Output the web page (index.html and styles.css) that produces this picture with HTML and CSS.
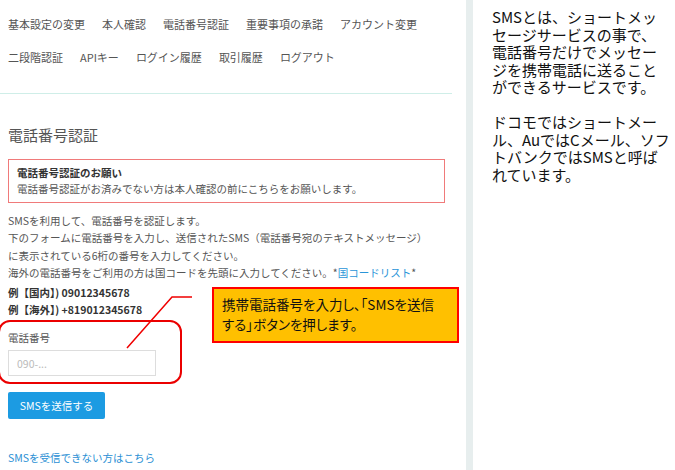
FILE: index.html
```html
<!DOCTYPE html>
<html lang="ja">
<head>
  <meta charset="UTF-8">
  <meta name="viewport" content="width=device-width, initial-scale=1.0">
  <title>電話番号認証</title>
  <link rel="stylesheet" href="styles.css">
</head>

<body>
  <div class="page">
    <div class="main">
      <!-- Settings tabs -->
      <nav class="tabs">
        <div class="tab-row">
          <a href="#">基本設定の変更</a>
          <a href="#">本人確認</a>
          <a href="#">電話番号認証</a>
          <a href="#">重要事項の承諾</a>
          <a href="#">アカウント変更</a>
        </div>
        <div class="tab-row">
          <a href="#">二段階認証</a>
          <a href="#">APIキー</a>
          <a href="#">ログイン履歴</a>
          <a href="#">取引履歴</a>
          <a href="#">ログアウト</a>
        </div>
      </nav>

      <!-- Phone verification form -->
      <div class="content">
        <h2 class="title">電話番号認証</h2>

        <div class="alert">
          <strong>電話番号認証のお願い</strong>
          <p>電話番号認証がお済みでない方は本人確認の前にこちらをお願いします。</p>
        </div>

        <p class="desc">
          SMSを利用して、電話番号を認証します。<br>
          下のフォームに電話番号を入力し、送信されたSMS（電話番号宛のテキストメッセージ）<br>
          に表示されている6桁の番号を入力してください。<br>
          海外の電話番号をご利用の方は国コードを先頭に入力してください。*<a href="#">国コードリスト</a>*
        </p>

        <p class="examples">
          例【国内】) 09012345678<br>
          例【海外】) +819012345678
        </p>

        <label class="field-label" for="phone">電話番号</label>
        <input id="phone" class="field-input" type="text" placeholder="090-...">

        <button class="send-button">SMSを送信する</button>

        <a class="help-link" href="#">SMSを受信できない方はこちら</a>
      </div>

      <!-- Annotation overlay -->
      <div class="mark-ring"></div>
      <svg class="mark-line" width="200" height="360" viewBox="0 0 200 360">
        <polyline points="127,348 172,297 192,297" fill="none" stroke="#f00000" stroke-width="1.5" />
      </svg>
      <div class="callout">携帯電話番号を入力し、「SMSを送信<br>する」ボタンを押します。</div>
    </div>

    <div class="divider"></div>

    <!-- Side note -->
    <aside class="side">
      <p>SMSとは、ショートメッ<br>セージサービスの事で、<br>電話番号だけでメッセー<br>ジを携帯電話に送ること<br>ができるサービスです。</p>
      <p>ドコモではショートメー<br>ル、AuではCメール、ソフ<br>トバンクではSMSと呼ば<br>れています。</p>
    </aside>
  </div>
</body>
</html>
```

FILE: styles.css
```css
body {
  margin: 0;
  padding: 0;
  background-color: #fff;
  font-family: 'Noto Sans CJK JP', 'Noto Sans', sans-serif;
  color: #555;
}

.page {
  display: flex;
  min-height: 100vh;
}

.main {
  width: 452px;
  position: relative;
}

/* Tabs */
.tabs {
  padding: 8px 8px 19px;
  border-bottom: 1px solid #cfeee8;
}

.tab-row {
  display: flex;
  column-gap: 17px;
}

.tab-row a {
  font-size: 11px;
  line-height: 33px;
  color: #555;
  text-decoration: none;
  white-space: nowrap;
}

/* Content */
.content {
  padding: 0 7px 0 8px;
  font-size: 10.5px;
}

.title {
  margin: 31px 0 0;
  font-size: 15px;
  line-height: 20px;
  font-weight: normal;
  color: #555;
}

.alert {
  margin-top: 14px;
  border: 1px solid #f07a7a;
  padding: 5px 8px;
  line-height: 16px;
}

.alert strong {
  display: block;
  color: #333;
}

.alert p {
  margin: 0;
}

.desc {
  margin: 9px 0 0;
  line-height: 17.3px;
  white-space: nowrap;
}

.desc a {
  color: #2a95d8;
  text-decoration: none;
}

.examples {
  margin: 3px 0 0;
  line-height: 17px;
  font-weight: bold;
  color: #333;
}

.field-label {
  display: block;
  margin-top: 11px;
  line-height: 17px;
}

.field-input {
  display: block;
  margin-top: 4px;
  width: 148px;
  height: 26px;
  box-sizing: border-box;
  border: 1px solid #ddd;
  padding: 0 8px;
  font-family: inherit;
  font-size: 10.5px;
  color: #333;
}

.field-input::placeholder {
  color: #bbb;
}

.send-button {
  display: block;
  margin-top: 16px;
  width: 97px;
  height: 27px;
  border: none;
  border-radius: 2px;
  background-color: #1c9be2;
  color: #fff;
  font-family: inherit;
  font-size: 10.5px;
  cursor: pointer;
}

.help-link {
  display: block;
  margin-top: 30px;
  line-height: 17px;
  color: #2a8fd4;
  text-decoration: none;
}

/* Annotation */
.mark-ring {
  position: absolute;
  left: -2px;
  top: 320px;
  width: 184px;
  height: 64px;
  box-sizing: border-box;
  border: 2px solid #eb0000;
  border-radius: 12px;
}

.mark-line {
  position: absolute;
  left: 0;
  top: 0;
}

.callout {
  position: absolute;
  left: 212px;
  top: 287px;
  width: 247px;
  height: 56px;
  box-sizing: border-box;
  padding: 6px 0 0 8px;
  background-color: #ffc000;
  border: 2px solid #f00;
  font-size: 13.5px;
  line-height: 19.5px;
  font-feature-settings: "palt";
  color: #111;
  white-space: nowrap;
}

/* Divider and side note */
.divider {
  width: 7px;
  margin-left: 14px;
  background-color: #e7eeee;
}

.side {
  padding: 8px 0 0 19px;
  font-size: 15px;
  line-height: 17.5px;
  color: #111;
  white-space: nowrap;
}

.side p {
  margin: 0 0 17.5px;
}
```
